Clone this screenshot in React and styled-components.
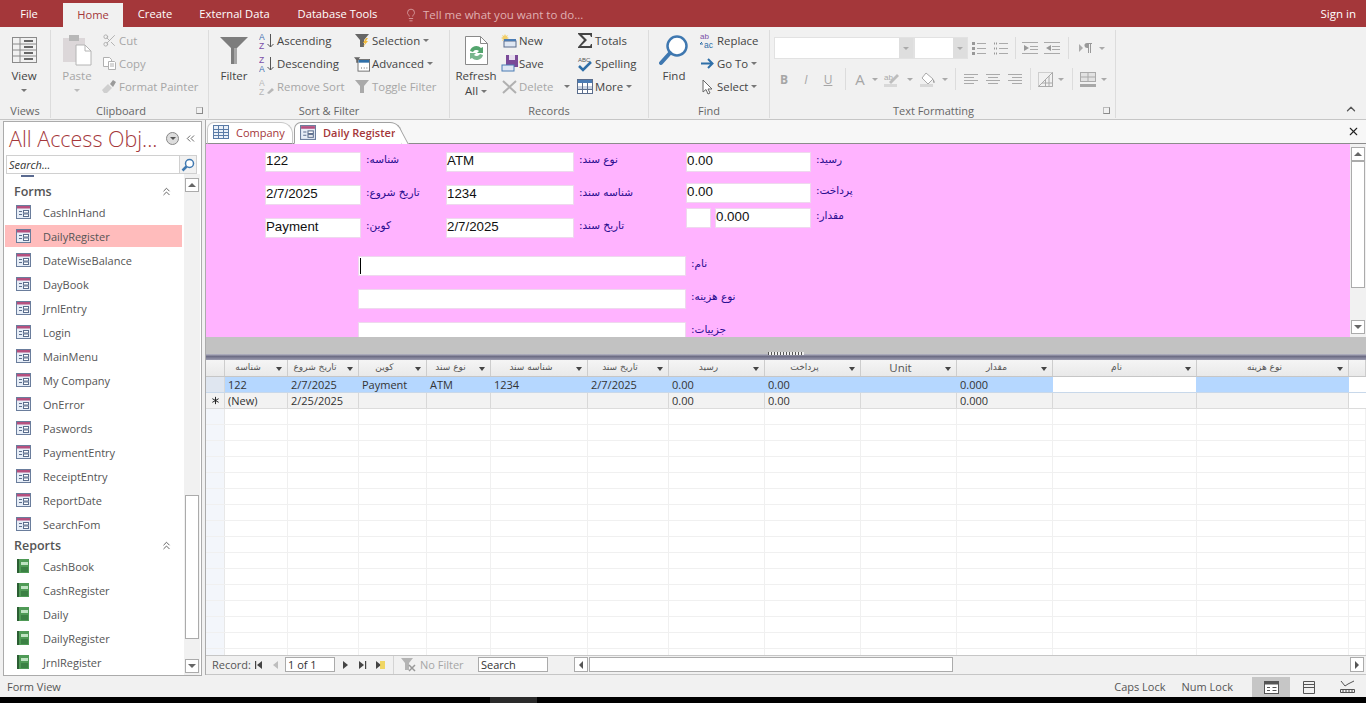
import styled, { createGlobalStyle } from "styled-components";
import { ChevronsUp, ChevronsLeft, ChevronUp, Lightbulb, Scissors, X, Asterisk } from "lucide-react";

const UI_FONT = `"Open Sans", "Noto Sans", sans-serif`;
const RED = "#a4373a";

const GlobalStyle = createGlobalStyle`
    html, body { margin: 0; height: 100%; overflow: hidden; background: #f1f1f1; }
    body { font-family: ${UI_FONT}; font-size: 11px; color: #444; }
    * { box-sizing: border-box; }
`;

const Page = styled.div`
    width: 1366px;
    height: 703px;
    display: flex;
    flex-direction: column;
    overflow: hidden;
`;

/* title bar */
const TitleBar = styled.div`
    height: 27px;
    flex: none;
    background: ${RED};
    display: flex;
    align-items: flex-end;
    padding-left: 5px;
    color: #fff;
`;
const TopTab = styled.div`
    width: ${p => p.$w}px;
    margin-left: ${p => p.$ml || 0}px;
    height: ${p => (p.$active ? 24 : 27)}px;
    line-height: ${p => (p.$active ? 24 : 28)}px;
    text-align: center;
    font-size: 11.2px;
    background: ${p => (p.$active ? "#f1f1f1" : "transparent")};
    color: ${p => (p.$active ? RED : "#fff")};
`;
const TellMe = styled.div`
    height: 27px;
    margin-left: 11px;
    display: flex;
    align-items: center;
    gap: 5px;
    padding-top: 2px;
    font-size: 11.5px;
    color: #e0b0b2;
    flex: 1;
`;
const SignIn = styled.div`
    height: 27px;
    line-height: 28px;
    padding-right: 10px;
    font-size: 11.5px;
`;

/* ribbon */
const Ribbon = styled.div`
    height: 93px;
    flex: none;
    background: #f1f1f1;
    border-bottom: 1px solid #c6c6c6;
    display: flex;
    padding-top: 3px;
    position: relative;
`;
const Group = styled.div`
    width: ${p => p.$w}px;
    flex: none;
    height: 88px;
    display: flex;
    flex-direction: column;
    border-right: ${p => (p.$plain ? "none" : "1px solid #dcdcdc")};
`;
const GroupBody = styled.div`
    flex: 1;
    display: flex;
    padding-left: ${p => p.$pl || 0}px;
    min-height: 0;
`;
const GroupLabel = styled.div`
    height: 16px;
    line-height: 17px;
    text-align: center;
    font-size: 11px;
    color: #666;
    position: relative;
    padding-right: ${p => p.$pr || 0}px;
`;
const Launcher = styled.span`
    position: absolute;
    right: 5px;
    top: 5px;
    width: 7px;
    height: 7px;
    border: 1px solid #8a8a8a;
    border-top-color: #bbb;
    border-left-color: #bbb;
`;
const BigButton = styled.div`
    width: ${p => p.$w}px;
    margin-right: ${p => p.$mr || 0}px;
    flex: none;
    display: flex;
    flex-direction: column;
    align-items: center;
    padding-top: 4px;
    line-height: 15px;
    font-size: 11.5px;
    color: ${p => (p.$off ? "#a6a6a6" : "#444")};
`;
const BigIcon = styled.div`
    height: 32px;
    margin-bottom: 2px;
    display: flex;
    align-items: center;
    justify-content: center;
`;
const Caret = styled.span`
    display: inline-block;
    width: 0;
    height: 0;
    border-left: 3px solid transparent;
    border-right: 3px solid transparent;
    border-top: 3px solid ${p => p.$c || "#777"};
    vertical-align: middle;
    margin-left: ${p => p.$ml ?? 3}px;
    margin-top: ${p => p.$mt || 0}px;
`;
const Stack = styled.div`
    width: ${p => p.$w}px;
    flex: none;
    display: flex;
    flex-direction: column;
    margin-top: -1px;
`;
const SmallButton = styled.div`
    height: 23px;
    display: flex;
    align-items: center;
    white-space: nowrap;
    font-size: 11.4px;
    color: ${p => (p.$off ? "#a6a6a6" : "#444")};
`;
const SmallIcon = styled.span`
    width: ${p => p.$w || 18}px;
    flex: none;
    display: flex;
    align-items: center;
    justify-content: center;
    margin-right: 1px;
`;
const FormatRows = styled.div`
    display: flex;
    flex-direction: column;
    padding-top: 7px;
    gap: 9px;
`;
const FormatRow = styled.div`
    display: flex;
    align-items: center;
    height: 22px;
`;
const Combo = styled.div`
    width: ${p => p.$w}px;
    height: 22px;
    flex: none;
    margin-left: ${p => p.$ml || 0}px;
    background: #fff;
    border: 1px solid #e2e2e2;
    display: flex;
    justify-content: flex-end;
`;
const ComboArrow = styled.div`
    width: 14px;
    background: #dedede;
    display: flex;
    align-items: center;
    justify-content: center;
`;
const FormatCell = styled.div`
    width: ${p => p.$w}px;
    height: 22px;
    flex: none;
    display: flex;
    align-items: center;
    justify-content: center;
    font-size: ${p => p.$fs || 12}px;
    font-weight: ${p => p.$fw || 400};
    font-style: ${p => p.$fst || "normal"};
    text-decoration: ${p => p.$td || "none"};
    color: #a6a6a6;
`;
const FormatSep = styled.div`
    width: ${p => p.$w}px;
    height: 22px;
    flex: none;
    display: flex;
    justify-content: center;
    &::after {
        content: "";
        width: 1px;
        background: #dcdcdc;
    }
`;
const CollapseRibbon = styled.div`
    position: absolute;
    right: 8px;
    bottom: 0;
    color: #555;
`;

/* main */
const Main = styled.div`
    height: 557px;
    flex: none;
    display: flex;
    background: #f1f1f1;
`;
const NavPane = styled.div`
    width: 199px;
    margin-left: 3px;
    margin-top: 1px;
    height: 555px;
    flex: none;
    background: #fff;
    border: 1px solid #ababab;
    display: flex;
    flex-direction: column;
`;
const NavHeader = styled.div`
    height: 33px;
    flex: none;
    display: flex;
    align-items: center;
    padding: 0 4px 0 5px;
`;
const NavTitle = styled.div`
    font-size: 21.5px;
    font-weight: 300;
    color: ${RED};
    flex: 1;
    white-space: nowrap;
`;
const RoundMenu = styled.span`
    width: 13px;
    height: 13px;
    border-radius: 50%;
    background: #ddd;
    border: 1px solid #888;
    display: flex;
    align-items: center;
    justify-content: center;
    margin-right: 5px;
`;
const SearchBox = styled.div`
    height: 19px;
    flex: none;
    margin: 0 4px 0 2px;
    border: 1px solid #d0d0d0;
    display: flex;
    align-items: center;
    justify-content: space-between;
    font-style: italic;
    font-size: 11px;
    color: #333;
    padding-left: 2px;
`;
const SearchIconBox = styled.span`
    width: 17px;
    height: 17px;
    background: #f1f1f1;
    border-left: 1px solid #d0d0d0;
    display: flex;
    align-items: center;
    justify-content: center;
`;
const NavBody = styled.div`
    flex: 1;
    min-height: 0;
    display: flex;
`;
const NavList = styled.div`
    width: 177px;
    margin: 0 2px 0 1px;
    flex: none;
    overflow: hidden;
    display: flex;
    flex-direction: column;
`;
const Sliver = styled.div`
    width: 13px;
    height: 2px;
    flex: none;
    margin: 1px 0 5px 16px;
    background: #5a6a90;
`;
const SectionHeader = styled.div`
    height: 18px;
    flex: none;
    display: flex;
    align-items: center;
    justify-content: space-between;
    padding: 0 9px 0 9px;
    font-size: 12.5px;
    font-weight: 600;
    color: #555;
`;
const NavItem = styled.div`
    height: 22px;
    flex: none;
    margin: 1px 0;
    display: flex;
    align-items: center;
    padding-left: 11px;
    gap: 12px;
    font-size: 11px;
    color: #555;
    background: ${p => (p.$selected ? "#ffbcbc" : "transparent")};
`;
const Scrollbar = styled.div`
    width: ${p => p.$w}px;
    flex: none;
    display: flex;
    flex-direction: column;
    background: #f1f1f1;
    padding-top: ${p => p.$pt || 0}px;
    padding-bottom: ${p => p.$pb || 0}px;
    padding-left: 1px;
    padding-right: 1px;
`;
const ScrollButton = styled.div`
    height: 14px;
    flex: none;
    background: #fff;
    border: 1px solid #ababab;
    display: flex;
    align-items: center;
    justify-content: center;
    &::after {
        content: "";
        border-left: 4px solid transparent;
        border-right: 4px solid transparent;
        ${p => (p.$up ? "border-bottom: 4px solid #666;" : "border-top: 4px solid #666;")}
    }
`;
const ScrollGap = styled.div`
    height: ${p => p.$h}px;
    flex: ${p => (p.$h ? "none" : 1)};
`;
const ScrollThumb = styled.div`
    height: ${p => p.$h}px;
    flex: none;
    background: #fff;
    border: 1px solid #ababab;
`;

/* document area */
const DocArea = styled.div`
    width: 1161px;
    margin-left: 3px;
    margin-bottom: 2px;
    flex: none;
    display: flex;
    flex-direction: column;
    background: #fff;
    border-left: 1px solid #ababab;
`;
const DocTabs = styled.div`
    height: 24px;
    flex: none;
    background: #f7f7f7;
    border-bottom: 1px solid #8c8c8c;
    display: flex;
    align-items: flex-end;
    padding-left: 1px;
    gap: 1px;
    position: relative;
`;
const DocTab = styled.div`
    width: ${p => p.$w}px;
    height: 22px;
    margin-bottom: -1px;
    padding: 0 0 2px 5px;
    background: #fff;
    border: 1px solid ${p => (p.$active ? "#a0a0a0" : "#c8c8c8")};
    border-bottom: ${p => (p.$active ? "1px solid #fff" : "1px solid #8c8c8c")};
    border-radius: 7px 12px 0 0;
    display: flex;
    align-items: center;
    gap: 7px;
    font-size: 11px;
    font-weight: ${p => (p.$active ? 600 : 400)};
    color: ${RED};
    position: relative;
    white-space: nowrap;
    ${p => p.$active && `
        &::after {
            content: "";
            position: absolute;
            right: -4px;
            top: 7px;
            bottom: -1px;
            width: 6px;
            background: #fff;
            border-right: 1px solid #a0a0a0;
            transform: skewX(28deg);
        }
    `}
`;
const CloseDoc = styled.div`
    position: absolute;
    right: 6px;
    top: 5px;
    color: #222;
    display: flex;
`;
const FormPane = styled.div`
    height: 193px;
    flex: none;
    display: flex;
    overflow: hidden;
`;
const FormCanvas = styled.div`
    flex: 1;
    background: #ffb3ff;
    overflow: hidden;
    padding: 8px 0 0 59px;
    font-family: "Liberation Sans", Arial, sans-serif;
`;
const TopFields = styled.div`
    display: flex;
    height: 86px;
`;
const FieldColumn = styled.div`
    width: ${p => p.$w}px;
    flex: none;
    display: flex;
    flex-direction: column;
    gap: ${p => p.$gap}px;
`;
const FieldRow = styled.div`
    display: flex;
    gap: ${p => p.$gap ?? 5}px;
    margin-top: ${p => p.$mt || 0}px;
`;
const FieldBox = styled.div`
    width: ${p => p.$w}px;
    height: ${p => p.$h || 20}px;
    flex: none;
    background: #fff;
    border: 1px solid #eed8ee;
    font-size: 13.3px;
    line-height: 15px;
    color: #111;
    margin-right: ${p => p.$mr || 0}px;
    margin-left: ${p => p.$ml || 0}px;
    position: relative;
    ${p => p.$caret && `
        &::after {
            content: "";
            position: absolute;
            left: 1px;
            top: 1px;
            width: 1px;
            height: 16px;
            background: #000;
        }
    `}
`;
const FieldLabel = styled.div`
    font-family: "DejaVu Sans", sans-serif;
    font-size: 10.5px;
    line-height: 14px;
    color: #2a0c90;
    direction: rtl;
    white-space: nowrap;
`;
const LowerFields = styled.div`
    margin-left: 93px;
    margin-top: 18px;
    display: flex;
    flex-direction: column;
    gap: 13px;
`;
const GrayBand = styled.div`
    height: 17px;
    flex: none;
    background: #c2c2c2;
`;
const Splitter = styled.div`
    height: 6px;
    flex: none;
    background: linear-gradient(#b9b9c6, #6c6c84 40%, #9c9cb0);
    position: relative;
    &::after {
        content: "";
        position: absolute;
        left: 562px;
        top: -2px;
        width: 36px;
        height: 3px;
        background: repeating-linear-gradient(90deg, #555 0 1px, #eee 1px 3px);
    }
`;
const Sheet = styled.div`
    flex: 1;
    min-height: 0;
    overflow: hidden;
    background: #fff;
`;
const COLUMNS = "19px 63px 71px 68px 64px 97px 81px 96px 96px 96px 96px 144px 152px 17px";
const SheetHeader = styled.div`
    height: 17px;
    display: grid;
    grid-template-columns: ${COLUMNS};
    background: linear-gradient(#f5f5f5, #e9e9e9);
    border-bottom: 1px solid #c6c6c6;
`;
const HeaderCell = styled.div`
    position: relative;
    border-right: 1px solid #cdcdcd;
    font-family: ${p => (p.$latin ? UI_FONT : `"DejaVu Sans", sans-serif`)};
    font-size: ${p => (p.$latin ? 11.5 : 9)}px;
    color: #555;
    text-align: center;
    line-height: 15px;
    padding-right: 16px;
    white-space: nowrap;
    &::after {
        ${p => (p.$noArrow ? "" : `content: "";`)}
        position: absolute;
        right: 5px;
        top: 7px;
        border-left: 3px solid transparent;
        border-right: 3px solid transparent;
        border-top: 4px solid #444;
    }
`;
const SheetRow = styled.div`
    height: 16px;
    display: grid;
    grid-template-columns: ${COLUMNS};
    background: ${p => p.$bg};
    border-bottom: 1px solid ${p => p.$line || "#dcdcdc"};
`;
const Cell = styled.div`
    background: ${p => p.$bg || "transparent"};
    border-right: 1px solid ${p => p.$line || "#d8d8d8"};
    font-size: 11px;
    line-height: 15px;
    padding-left: 3px;
    color: #333;
    white-space: nowrap;
    overflow: hidden;
`;
const SelectorCell = styled(Cell)`
    padding: 0;
    background: ${p => p.$bg || "#f3f6fb"};
    display: flex;
    align-items: center;
    justify-content: center;
    color: #222;
`;
const RecordBar = styled.div`
    height: 20px;
    flex: none;
    border-top: 1px solid #c6c6c6;
    border-bottom: 1px solid #c6c6c6;
    background: #f1f1f1;
    display: flex;
    align-items: center;
    padding: 0 0 1px 6px;
    font-size: 11px;
    color: #555;
`;
const RecordLabel = styled.span`
    width: 42px;
    flex: none;
`;
const PagerCell = styled.span`
    width: ${p => p.$w}px;
    flex: none;
    display: flex;
    align-items: center;
    justify-content: center;
    margin-left: ${p => p.$ml || 0}px;
`;
const RecordInput = styled.div`
    width: ${p => p.$w}px;
    height: 15px;
    flex: none;
    margin-left: ${p => p.$ml || 0}px;
    background: #fff;
    border: 1px solid #aaa;
    line-height: 13px;
    font-size: 11px;
    padding-left: 2px;
    color: #333;
`;
const NoFilter = styled.span`
    width: 85px;
    flex: none;
    display: flex;
    align-items: center;
    gap: 2px;
    padding-left: 7px;
    border-left: 1px solid #d4d4d4;
    color: #a6a6a6;
    height: 18px;
`;
const HScrollButton = styled.span`
    width: 14px;
    height: 15px;
    flex: none;
    background: #fff;
    border: 1px solid #ababab;
    display: flex;
    align-items: center;
    justify-content: center;
    margin-left: ${p => p.$ml || 0}px;
    margin-right: ${p => p.$mr || 0}px;
    &::after {
        content: "";
        border-top: 4px solid transparent;
        border-bottom: 4px solid transparent;
        ${p => (p.$left ? "border-right: 4px solid #555;" : "border-left: 4px solid #555;")}
    }
`;
const HScrollThumb = styled.span`
    width: 364px;
    height: 15px;
    flex: none;
    margin-left: 1px;
    background: #fff;
    border: 1px solid #ababab;
`;
const HScrollGap = styled.span`
    flex: 1;
`;
const StatusBar = styled.div`
    height: 20px;
    flex: none;
    background: #f1f1f1;
    display: flex;
    align-items: center;
    font-size: 11px;
    color: #555;
    padding-left: 7px;
`;
const StatusText = styled.span`
    margin: 0 ${p => p.$mr || 0}px 2px 0;
    white-space: nowrap;
`;
const StatusSpacer = styled.span`
    flex: 1;
`;
const ViewToggle = styled.span`
    width: 38px;
    height: 20px;
    flex: none;
    display: flex;
    align-items: center;
    justify-content: center;
    background: ${p => (p.$active ? "#c6c6c6" : "transparent")};
`;
const Taskbar = styled.div`
    flex: 1;
    background: #000;
    padding-left: 490px;
`;
const TaskbarItem = styled.div`
    width: 47px;
    height: 100%;
    background: #2a2a2a;
`;

/* drawings */
const ViewIcon = () => (
    <svg width="27" height="28" viewBox="0 0 27 28" fill="none" stroke="#8a8a8a">
        <rect x="1.5" y="1.5" width="24" height="25" />
        <path d="M1.5 8h24M1.5 14h24M1.5 20h24M9 1.5v25" />
        <path d="M13 5h9M13 11h9M13 17h9M13 23h9" stroke="#666" strokeWidth="2" />
    </svg>
);
const PasteIcon = () => (
    <svg width="30" height="32" viewBox="0 0 30 32">
        <rect x="1" y="4" width="22" height="24" fill="#dcd7d9" />
        <rect x="7" y="1" width="10" height="6" fill="#b8b8b8" />
        <path d="M14 11h9l6 6v14H14z" fill="#fff" stroke="#b4b4b4" />
        <path d="M23 11v6h6" fill="none" stroke="#b4b4b4" />
    </svg>
);
const CopyIcon = () => (
    <svg width="15" height="15" viewBox="0 0 15 15" fill="#fff" stroke="#b0b0b0">
        <path d="M1.5 1.5h6l2 2v7h-8z" />
        <path d="M6.5 5.5h6l1 1v7h-7z" />
        <path d="M8 8h4M8 10h4" />
    </svg>
);
const PainterIcon = () => (
    <svg width="16" height="15" viewBox="0 0 16 15">
        <path d="M1 11l6-6 4 4-5 5H3z" fill="#cfcfcf" />
        <path d="M9 5l3-4 3 2-3 5z" fill="#9a9a9a" />
    </svg>
);
const FunnelBig = () => (
    <svg width="30" height="29" viewBox="0 0 30 29">
        <path d="M1 1h28L18 12v16h-6V12z" fill="#7d7d7d" />
        <path d="M15 12h3v16h-3z" fill="#a6a6a6" />
    </svg>
);
const SortIcon = ({ top, bottom, off }) => (
    <svg width="16" height="17" viewBox="0 0 16 17">
        <text x="0" y="8" fontSize="8.5" fontFamily="Liberation Sans" fill={off ? "#b8b8b8" : top === "A" ? "#3f6fb0" : "#7a4fa8"}>{top}</text>
        <text x="0" y="16.500" fontSize="8.5" fontFamily="Liberation Sans" fill={off ? "#b8b8b8" : top === "A" ? "#7a4fa8" : "#3f6fb0"}>{bottom}</text>
        {off
            ? <path d="M8 15l5-5 2 2-5 4z" fill="#b8b8b8" />
            : <path d="M11.5 2v13M8.5 12l3 3 3-3" fill="none" stroke="#555" />}
    </svg>
);
const SmallFunnel = ({ color = "#666", bolt }) => (
    <svg width="17" height="15" viewBox="0 0 17 15">
        <path d="M1 1h14L10 7v7H6V7z" fill={color} />
        {bolt && <path d="M12 5l-3 5h2l-2 4 5-6h-2l2-3z" fill="#f0b93a" />}
    </svg>
);
const AdvancedIcon = () => (
    <svg width="16" height="16" viewBox="0 0 18 17">
        <path d="M0 1h7L4.5 4v3h-2V4z" fill="#666" />
        <rect x="4.5" y="3.5" width="13" height="13" fill="#fff" stroke="#666" />
        <rect x="5" y="4" width="12" height="3" fill="#2f6fa8" />
        <path d="M8 13h1M11 13h1M14 13h1" stroke="#444" />
    </svg>
);
const RefreshIcon = () => (
    <svg width="25" height="31" viewBox="0 0 25 31">
        <path d="M1.5 1.5h15l7 7v21h-22z" fill="#fff" stroke="#8a8a8a" />
        <path d="M16.5 1.5v7h7" fill="none" stroke="#8a8a8a" />
        <path d="M6 16a6.500 6.500 0 0 1 11-3l2-1v6h-6l2-2a4 4 0 0 0-6 1z" fill="#54a56e" />
        <path d="M19 20a6.500 6.500 0 0 1-11 3l-2 1v-6h6l-2 2a4 4 0 0 0 6-1z" fill="#79b68e" />
    </svg>
);
const NewIcon = () => (
    <svg width="16" height="14" viewBox="0 0 16 14">
        <path d="M4 0l1 2 2-1-1 2 2 1-2 1 1 2-2-1-1 2-1-2-2 1 1-2-2-1 2-1-1-2 2 1z" fill="#f3cf6a" />
        <rect x="3" y="7" width="12" height="6" fill="#dfe7f3" stroke="#5a6d8c" />
        <rect x="3" y="5" width="12" height="2" fill="#4b7cb4" />
    </svg>
);
const SaveIcon = () => (
    <svg width="17" height="17" viewBox="0 0 17 17">
        <rect x="5" y="0" width="12" height="12" fill="#7a4a98" />
        <rect x="8" y="0" width="6" height="5" fill="#e6dcef" />
        <rect x="1" y="10" width="12" height="6" fill="#dfe7f3" stroke="#4b7cb4" />
    </svg>
);
const DeleteIcon = () => (
    <svg width="15" height="14" viewBox="0 0 15 14" stroke="#b0b0b0" strokeWidth="2">
        <path d="M1 1l13 12M14 1L1 13" />
    </svg>
);
const SigmaIcon = () => (
    <svg width="16" height="15" viewBox="0 0 16 15">
        <path d="M1 0h14v4h-1l-1-2H5l5 5-6 6h9l1-2h1v4H1v-1l6-7-6-6z" fill="#444" />
    </svg>
);
const SpellIcon = () => (
    <svg width="16" height="16" viewBox="0 0 16 16">
        <text x="1" y="6" fontSize="6" fontFamily="Liberation Sans" fill="#555">ABC</text>
        <path d="M2 10l4 4 8-8" fill="none" stroke="#2f6fa8" strokeWidth="2.500" />
    </svg>
);
const MoreIcon = () => (
    <svg width="16" height="15" viewBox="0 0 16 15">
        <rect x="0.500" y="0.500" width="15" height="14" fill="#fff" stroke="#5a6d8c" />
        <rect x="1" y="1" width="14" height="3" fill="#4b7cb4" />
        <rect x="1" y="7" width="14" height="3" fill="#c9d3e2" />
        <path d="M5.500 4v10M10.500 4v10M1 10.500h14" stroke="#5a6d8c" fill="none" />
    </svg>
);
const FindIcon = () => (
    <svg width="30" height="32" viewBox="0 0 30 32">
        <circle cx="18" cy="12" r="9.500" fill="#fff" stroke="#3f78b0" strokeWidth="2.500" />
        <path d="M11 19L2 29" stroke="#3f78b0" strokeWidth="4" strokeLinecap="round" />
    </svg>
);
const ReplaceIcon = () => (
    <svg width="17" height="17" viewBox="0 0 17 17">
        <text x="1" y="6.500" fontSize="8" fontFamily="Liberation Sans" fill="#7a4fa8">ab</text>
        <text x="5" y="16" fontSize="8.500" fontFamily="Liberation Sans" fill="#2f6fa8">ac</text>
        <path d="M1 12h3M1 12l2-2" stroke="#2f6fa8" fill="none" />
    </svg>
);
const GoToIcon = () => (
    <svg width="13" height="11" viewBox="0 0 13 11" fill="none" stroke="#2f6fa8" strokeWidth="2">
        <path d="M0 5.500h11M7 1l4.500 4.500L7 10" />
    </svg>
);
const SelectIcon = () => (
    <svg width="11" height="16" viewBox="0 0 11 16">
        <path d="M1 1v12l3-2.500 2 4.500 2-1-2-4h4z" fill="#fff" stroke="#666" />
    </svg>
);
const ListIcon = ({ numbered }) => (
    <svg width="15" height="15" viewBox="0 0 15 15" stroke="#aaa">
        <path d="M6 2.500h9M6 7.500h9M6 12.500h9" />
        {numbered
            ? <path d="M1 2.500h3M1 7.500h3M1 12.500h3" stroke="#999" strokeWidth="2" strokeDasharray="1 1" />
            : <path d="M1 2.500h3M1 7.500h3M1 12.500h3" stroke="#999" strokeWidth="3" />}
    </svg>
);
const IndentIcon = ({ out }) => (
    <svg width="16" height="14" viewBox="0 0 16 14" stroke="#aaa">
        <path d="M0 1.500h16M8 5.500h8M8 8.500h8M0 12.500h16" />
        <path d={out ? "M7 4v6L2 7z" : "M2 4v6l5-3z"} fill="#999" stroke="none" />
    </svg>
);
const PilcrowIcon = () => (
    <svg width="13" height="10" viewBox="0 0 13 10">
        <path d="M0 1v8l4-4z" fill="#aaa" />
        <path d="M8 0h5v1h-1v9h-1V1h-1v9H9V5a3 2.500 0 0 1-1-5z" fill="#999" />
    </svg>
);
const HighlightIcon = () => (
    <svg width="16" height="15" viewBox="0 0 16 15">
        <text x="0" y="8" fontSize="8" fontFamily="Liberation Sans" fill="#aaa">ab</text>
        <path d="M5 10l8-8 2 2-8 8z" fill="#bdbdbd" />
        <rect x="0" y="12" width="13" height="3" fill="#d8d8d8" />
    </svg>
);
const FillIcon = () => (
    <svg width="16" height="15" viewBox="0 0 16 15">
        <path d="M6 1l7 6-5 5-6-6z" fill="#fff" stroke="#aaa" />
        <path d="M13 7c2 2 2 4 1 4s-1-2-1-4z" fill="#999" />
        <rect x="0" y="12" width="13" height="3" fill="#d8d8d8" />
    </svg>
);
const AlignIcon = ({ kind }) => {
    const short = kind === "left" ? "M0 4.500h10M0 10.500h10" : kind === "right" ? "M4 4.500h10M4 10.500h10" : "M2 4.500h10M2 10.500h10";
    return (
        <svg width="14" height="12" viewBox="0 0 14 12" stroke="#aaa">
            <path d="M0 1.500h14M0 7.500h14" />
            <path d={short} />
        </svg>
    );
};
const AltGridIcon = () => (
    <svg width="15" height="15" viewBox="0 0 15 15" fill="none" stroke="#aaa">
        <path d="M.5.500h14v14H.5z" strokeDasharray="1 1" />
        <path d="M.5 14.500L14.500.500v14zM7.500 7.500v7M11 4v10.500M4 11h10.500" />
    </svg>
);
const GridlinesIcon = () => (
    <svg width="16" height="15" viewBox="0 0 16 15">
        <rect x="0.500" y="0.500" width="15" height="9" fill="#e2e2e2" stroke="#aaa" />
        <path d="M0 5h16M8 1v8" stroke="#aaa" />
        <rect x="0" y="12" width="16" height="3" fill="#a8a8a8" />
    </svg>
);
const FormIcon = ({ size = 15 }) => (
    <svg width={size} height={size - 1} viewBox="0 0 15 14">
        <rect x="0.500" y="0.500" width="14" height="13" fill="#e6edf7" stroke="#6a7d9c" />
        <rect x="1" y="1" width="13" height="2.500" fill="#b5507f" />
        <path d="M3 6.500h3M3 9.500h3" stroke="#5a6d8c" />
        <rect x="7.500" y="5.500" width="5" height="2.500" fill="#fff" stroke="#5a6d8c" />
        <rect x="7.500" y="9" width="5" height="2.500" fill="#fff" stroke="#5a6d8c" />
    </svg>
);
const ReportIcon = () => (
    <svg width="15" height="15" viewBox="0 0 15 15">
        <rect x="1" y="0" width="12" height="14" fill="#4f9a56" />
        <rect x="1" y="0" width="2" height="14" fill="#2b5e33" />
        <rect x="5" y="3" width="7" height="3" fill="#bfe3c2" />
        <rect x="5" y="8" width="7" height="5" fill="#3b8144" />
    </svg>
);
const TableIcon = () => (
    <svg width="16" height="14" viewBox="0 0 16 14" fill="#eaf0f8" stroke="#5a7ba6">
        <rect x="0.500" y="0.500" width="15" height="13" />
        <path d="M0 4.500h16M0 7.500h16M0 10.500h16M5.500 0v14M10.500 0v14" fill="none" />
    </svg>
);
const MagnifierIcon = () => (
    <svg width="14" height="14" viewBox="0 0 14 14">
        <circle cx="8.500" cy="5.500" r="4" fill="#fff" stroke="#3f78b0" strokeWidth="1.500" />
        <path d="M5.500 8.500L1.500 12.500" stroke="#3f78b0" strokeWidth="2.500" />
    </svg>
);
const PagerGlyph = ({ dir, stop, off, star }) => (
    <svg width="12" height="10" viewBox="0 0 12 10" fill={off ? "#bdbdbd" : "#444"}>
        {dir === "left" ? <path d="M8 1v8L3 5z" /> : <path d="M3 1v8l5-4z" />}
        {stop && <rect x={dir === "left" ? 1 : 9} y="1" width="1.200" height="8" />}
        {star && <path d="M7 1h5v8H7z" fill="#f0d040" opacity="0.800" />}
    </svg>
);
const NoFilterIcon = () => (
    <svg width="17" height="15" viewBox="0 0 17 15">
        <path d="M0 1h12L8 6v7H4V6z" fill="#b4b4b4" />
        <path d="M8 8l6 6M14 8l-6 6" stroke="#999" strokeWidth="1.500" />
    </svg>
);
const FormViewGlyph = () => (
    <svg width="15" height="13" viewBox="0 0 15 13" fill="#fff" stroke="#555">
        <rect x="0.500" y="0.500" width="14" height="12" />
        <rect x="1" y="1" width="13" height="2.500" fill="#555" stroke="none" />
        <path d="M3 6.500h3M3 9.500h3M8.500 6.500h4M8.500 9.500h4" />
    </svg>
);
const SheetViewGlyph = () => (
    <svg width="12" height="13" viewBox="0 0 12 13" fill="none" stroke="#555">
        <path d="M.5.500h11v12H.5zM.5 6.500h11M.5 3.500h11M4 6.500h4" />
    </svg>
);
const DesignViewGlyph = () => (
    <svg width="15" height="14" viewBox="0 0 15 14" fill="none" stroke="#555">
        <path d="M1 1l4 5 3-2 6-3" />
        <path d="M.5 9.500h14v3H.5zM3 9.500v3M6 9.500v3M9 9.500v3M12 9.500v3" />
    </svg>
);

const forms = ["CashInHand", "DailyRegister", "DateWiseBalance", "DayBook", "JrnlEntry", "Login", "MainMenu", "My Company", "OnError", "Paswords", "PaymentEntry", "ReceiptEntry", "ReportDate", "SearchFom"];
const reports = ["CashBook", "CashRegister", "Daily", "DailyRegister", "JrnlRegister"];

const headers = [
    { text: "شناسه" }, { text: "تاریخ شروع" }, { text: "کوین" }, { text: "نوع سند" }, { text: "شناسه سند" },
    { text: "تاریخ سند" }, { text: "رسید" }, { text: "پرداخت" }, { text: "Unit", latin: true }, { text: "مقدار" },
    { text: "نام" }, { text: "نوع هزینه" },
];
const firstRow = ["122", "2/7/2025", "Payment", "ATM", "1234", "2/7/2025", "0.00", "0.00", "", "0.000", "", ""];
const newRow = ["(New)", "2/25/2025", "", "", "", "", "0.00", "0.00", "", "0.000", "", ""];

const Field = ({ w, value, label, mr }) => (
    <FieldRow>
        <FieldBox $w={w} $mr={mr}>{value}</FieldBox>
        <FieldLabel dir="rtl">{label}</FieldLabel>
    </FieldRow>
);

export default function App() {
    return (
        <Page>
            <GlobalStyle />
            <TitleBar>
                <TopTab $w={48}>File</TopTab>
                <TopTab $w={60} $ml={10} $active>Home</TopTab>
                <TopTab $w={64}>Create</TopTab>
                <TopTab $w={95}>External Data</TopTab>
                <TopTab $w={111}>Database Tools</TopTab>
                <TellMe><Lightbulb size={14} strokeWidth={1.3} />Tell me what you want to do...</TellMe>
                <SignIn>Sign in</SignIn>
            </TitleBar>

            <Ribbon>
                <Group $w={51}>
                    <GroupBody>
                        <BigButton $w={48}>
                            <BigIcon><ViewIcon /></BigIcon>
                            View
                            <Caret $ml={0} $mt={6} />
                        </BigButton>
                    </GroupBody>
                    <GroupLabel>Views</GroupLabel>
                </Group>

                <Group $w={158}>
                    <GroupBody $pl={7}>
                        <BigButton $w={38} $off $mr={4}>
                            <BigIcon><PasteIcon /></BigIcon>
                            Paste
                            <Caret $ml={0} $c="#bbb" $mt={6} />
                        </BigButton>
                        <Stack $w={105}>
                            <SmallButton $off><SmallIcon><Scissors size={15} strokeWidth={1.4} color="#aaa" /></SmallIcon>Cut</SmallButton>
                            <SmallButton $off><SmallIcon><CopyIcon /></SmallIcon>Copy</SmallButton>
                            <SmallButton $off><SmallIcon><PainterIcon /></SmallIcon>Format Painter</SmallButton>
                        </Stack>
                    </GroupBody>
                    <GroupLabel $pr={17}>Clipboard<Launcher /></GroupLabel>
                </Group>

                <Group $w={241}>
                    <GroupBody $pl={7}>
                        <BigButton $w={36} $mr={6}>
                            <BigIcon><FunnelBig /></BigIcon>
                            Filter
                        </BigButton>
                        <Stack $w={95}>
                            <SmallButton><SmallIcon><SortIcon top="A" bottom="Z" /></SmallIcon>Ascending</SmallButton>
                            <SmallButton><SmallIcon><SortIcon top="Z" bottom="A" /></SmallIcon>Descending</SmallButton>
                            <SmallButton $off><SmallIcon><SortIcon top="A" bottom="Z" off /></SmallIcon>Remove Sort</SmallButton>
                        </Stack>
                        <Stack $w={90}>
                            <SmallButton><SmallIcon><SmallFunnel bolt /></SmallIcon>Selection<Caret /></SmallButton>
                            <SmallButton><SmallIcon><AdvancedIcon /></SmallIcon>Advanced<Caret /></SmallButton>
                            <SmallButton $off><SmallIcon><SmallFunnel color="#aaa" /></SmallIcon>Toggle Filter</SmallButton>
                        </Stack>
                    </GroupBody>
                    <GroupLabel>Sort &amp; Filter</GroupLabel>
                </Group>

                <Group $w={199}>
                    <GroupBody $pl={5}>
                        <BigButton $w={42} $mr={3}>
                            <BigIcon><RefreshIcon /></BigIcon>
                            Refresh
                            <span>All<Caret /></span>
                        </BigButton>
                        <Stack $w={76}>
                            <SmallButton><SmallIcon><NewIcon /></SmallIcon>New</SmallButton>
                            <SmallButton><SmallIcon><SaveIcon /></SmallIcon>Save</SmallButton>
                            <SmallButton $off><SmallIcon><DeleteIcon /></SmallIcon>Delete<Caret $ml={11} /></SmallButton>
                        </Stack>
                        <Stack $w={70}>
                            <SmallButton><SmallIcon><SigmaIcon /></SmallIcon>Totals</SmallButton>
                            <SmallButton><SmallIcon><SpellIcon /></SmallIcon>Spelling</SmallButton>
                            <SmallButton><SmallIcon><MoreIcon /></SmallIcon>More<Caret /></SmallButton>
                        </Stack>
                    </GroupBody>
                    <GroupLabel>Records</GroupLabel>
                </Group>

                <Group $w={121}>
                    <GroupBody $pl={7}>
                        <BigButton $w={36} $mr={6}>
                            <BigIcon><FindIcon /></BigIcon>
                            Find
                        </BigButton>
                        <Stack $w={70}>
                            <SmallButton><SmallIcon><ReplaceIcon /></SmallIcon>Replace</SmallButton>
                            <SmallButton><SmallIcon><GoToIcon /></SmallIcon>Go To<Caret /></SmallButton>
                            <SmallButton><SmallIcon><SelectIcon /></SmallIcon>Select<Caret /></SmallButton>
                        </Stack>
                    </GroupBody>
                    <GroupLabel>Find</GroupLabel>
                </Group>

                <Group $w={346}>
                    <GroupBody $pl={3}>
                        <FormatRows>
                            <FormatRow>
                                <Combo $w={140} $ml={1}><ComboArrow><Caret $ml={0} $c="#aaa" /></ComboArrow></Combo>
                                <Combo $w={54}><ComboArrow><Caret $ml={0} $c="#aaa" /></ComboArrow></Combo>
                                <FormatCell $w={21}><ListIcon /></FormatCell>
                                <FormatCell $w={22}><ListIcon numbered /></FormatCell>
                                <FormatSep $w={8} />
                                <FormatCell $w={22}><IndentIcon /></FormatCell>
                                <FormatCell $w={22}><IndentIcon out /></FormatCell>
                                <FormatSep $w={10} />
                                <FormatCell $w={24}><PilcrowIcon /></FormatCell>
                                <FormatCell $w={10}><Caret $ml={0} $c="#aaa" /></FormatCell>
                            </FormatRow>
                            <FormatRow>
                                <FormatCell $w={22} $fw={700}>B</FormatCell>
                                <FormatCell $w={22} $fst="italic">I</FormatCell>
                                <FormatCell $w={22} $td="underline">U</FormatCell>
                                <FormatSep $w={12} />
                                <FormatCell $w={18} $fs={15}>A</FormatCell>
                                <FormatCell $w={12}><Caret $ml={0} $c="#aaa" /></FormatCell>
                                <FormatCell $w={22}><HighlightIcon /></FormatCell>
                                <FormatCell $w={14}><Caret $ml={0} $c="#aaa" /></FormatCell>
                                <FormatCell $w={22}><FillIcon /></FormatCell>
                                <FormatCell $w={12}><Caret $ml={0} $c="#aaa" /></FormatCell>
                                <FormatSep $w={8} />
                                <FormatCell $w={23}><AlignIcon kind="left" /></FormatCell>
                                <FormatCell $w={22}><AlignIcon kind="center" /></FormatCell>
                                <FormatCell $w={22}><AlignIcon kind="right" /></FormatCell>
                                <FormatSep $w={8} />
                                <FormatCell $w={22}><AltGridIcon /></FormatCell>
                                <FormatCell $w={10}><Caret $ml={0} $c="#aaa" /></FormatCell>
                                <FormatSep $w={12} />
                                <FormatCell $w={20}><GridlinesIcon /></FormatCell>
                                <FormatCell $w={12}><Caret $ml={0} $c="#aaa" /></FormatCell>
                            </FormatRow>
                        </FormatRows>
                    </GroupBody>
                    <GroupLabel $pr={18}>Text Formatting<Launcher /></GroupLabel>
                </Group>
                <CollapseRibbon><ChevronUp size={14} strokeWidth={2.2} /></CollapseRibbon>
            </Ribbon>

            <Main>
                <NavPane>
                    <NavHeader>
                        <NavTitle>All Access Obj...</NavTitle>
                        <RoundMenu><Caret $ml={0} $c="#555" /></RoundMenu>
                        <ChevronsLeft size={13} strokeWidth={1.6} color="#555" />
                    </NavHeader>
                    <SearchBox>
                        Search...
                        <SearchIconBox><MagnifierIcon /></SearchIconBox>
                    </SearchBox>
                    <NavBody>
                        <NavList>
                            <Sliver />
                            <SectionHeader>Forms<ChevronsUp size={13} strokeWidth={1.5} color="#444" /></SectionHeader>
                            {forms.map(name => (
                                <NavItem key={name} $selected={name === "DailyRegister"}>
                                    <FormIcon />{name}
                                </NavItem>
                            ))}
                            <SectionHeader>Reports<ChevronsUp size={13} strokeWidth={1.5} color="#444" /></SectionHeader>
                            {reports.map(name => (
                                <NavItem key={name}>
                                    <ReportIcon />{name}
                                </NavItem>
                            ))}
                        </NavList>
                        <Scrollbar $w={16} $pt={4} $pb={2}>
                            <ScrollButton $up />
                            <ScrollGap $h={303} />
                            <ScrollThumb $h={144} />
                            <ScrollGap />
                            <ScrollButton />
                        </Scrollbar>
                    </NavBody>
                </NavPane>

                <DocArea>
                    <DocTabs>
                        <DocTab $w={86}><TableIcon />Company</DocTab>
                        <DocTab $w={108} $active><FormIcon size={16} />Daily Register</DocTab>
                        <CloseDoc><X size={13} strokeWidth={2} /></CloseDoc>
                    </DocTabs>
                    <FormPane>
                        <FormCanvas>
                            <TopFields>
                                <FieldColumn $w={181} $gap={13}>
                                    <Field w={96} value="122" label="شناسه:" />
                                    <Field w={96} value="2/7/2025" label="تاریخ شروع:" />
                                    <Field w={96} value="Payment" label="کوین:" />
                                </FieldColumn>
                                <FieldColumn $w={240} $gap={13}>
                                    <Field w={128} value="ATM" label="نوع سند:" />
                                    <Field w={128} value="1234" label="شناسه سند:" />
                                    <Field w={128} value="2/7/2025" label="تاریخ سند:" />
                                </FieldColumn>
                                <FieldColumn $w={200} $gap={11}>
                                    <Field w={125} value="0.00" label="رسید:" />
                                    <Field w={125} value="0.00" label="پرداخت:" />
                                    <FieldRow $mt={-6}>
                                        <FieldBox $w={25} $mr={-1} />
                                        <FieldBox $w={96}>0.000</FieldBox>
                                        <FieldLabel dir="rtl">مقدار:</FieldLabel>
                                    </FieldRow>
                                </FieldColumn>
                            </TopFields>
                            <LowerFields>
                                <FieldRow>
                                    <FieldBox $w={328} $caret />
                                    <FieldLabel dir="rtl">نام:</FieldLabel>
                                </FieldRow>
                                <Field w={328} label="نوع هزینه:" />
                                <Field w={328} label="جزییات:" />
                            </LowerFields>
                        </FormCanvas>
                        <Scrollbar $w={16} $pt={3} $pb={3}>
                            <ScrollButton $up />
                            <ScrollThumb $h={127} />
                            <ScrollGap />
                            <ScrollButton />
                        </Scrollbar>
                    </FormPane>
                    <GrayBand />
                    <Splitter />
                    <Sheet>
                        <SheetHeader>
                            <HeaderCell $noArrow />
                            {headers.map(h => (
                                <HeaderCell key={h.text} $latin={h.latin}>{h.text}</HeaderCell>
                            ))}
                            <HeaderCell $noArrow />
                        </SheetHeader>
                        <SheetRow $bg="#b5d7ff" $line="#c8d8ea">
                            <SelectorCell $bg="#dfe6f0" />
                            {firstRow.map((v, i) => (
                                <Cell key={i} $line="#b5d7ff" $bg={i === 10 ? "#fff" : undefined}>{v}</Cell>
                            ))}
                            <Cell $line="#fff" $bg="#fff" />
                        </SheetRow>
                        <SheetRow $bg="#f2f2f2">
                            <SelectorCell $bg="#f2f2f2"><Asterisk size={13} strokeWidth={1.8} /></SelectorCell>
                            {newRow.map((v, i) => <Cell key={i}>{v}</Cell>)}
                            <Cell $line="#fff" $bg="#fff" />
                        </SheetRow>
                        {Array.from({ length: 16 }).map((_, r) => (
                            <SheetRow key={r} $bg="#fff" $line="#f0f0f0">
                                <SelectorCell $line="#e8e8e8" />
                                {headers.map((h, i) => <Cell key={i} $line="#f0f0f0" />)}
                                <Cell $line="#f0f0f0" />
                            </SheetRow>
                        ))}
                    </Sheet>
                    <RecordBar>
                        <RecordLabel>Record:</RecordLabel>
                        <PagerCell $w={12}><PagerGlyph dir="left" stop /></PagerCell>
                        <PagerCell $w={19}><PagerGlyph dir="left" off /></PagerCell>
                        <RecordInput $w={50}>1 of 1</RecordInput>
                        <PagerCell $w={16} $ml={3}><PagerGlyph dir="right" /></PagerCell>
                        <PagerCell $w={16}><PagerGlyph dir="right" stop /></PagerCell>
                        <PagerCell $w={16} $ml={1}><PagerGlyph dir="right" star /></PagerCell>
                        <PagerCell $w={6} />
                        <NoFilter><NoFilterIcon />No Filter</NoFilter>
                        <RecordInput $w={70}>Search</RecordInput>
                        <HScrollButton $left $ml={26} />
                        <HScrollThumb />
                        <HScrollGap />
                        <HScrollButton $mr={2} />
                    </RecordBar>
                </DocArea>
            </Main>

            <StatusBar>
                <StatusText>Form View</StatusText>
                <StatusSpacer />
                <StatusText $mr={16}>Caps Lock</StatusText>
                <StatusText $mr={19}>Num Lock</StatusText>
                <ViewToggle $active><FormViewGlyph /></ViewToggle>
                <ViewToggle><SheetViewGlyph /></ViewToggle>
                <ViewToggle><DesignViewGlyph /></ViewToggle>
            </StatusBar>
            <Taskbar><TaskbarItem /></Taskbar>
        </Page>
    );
}
